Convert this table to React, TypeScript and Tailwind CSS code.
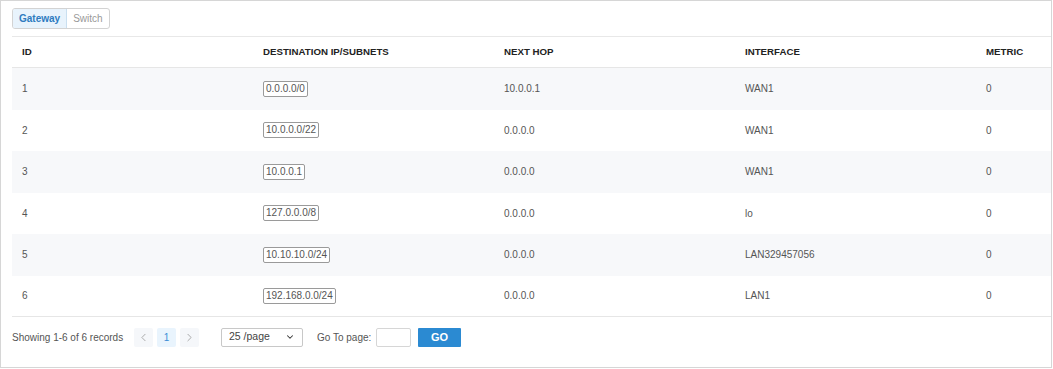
import { ChevronDown, ChevronLeft, ChevronRight } from 'lucide-react';

const routes = [
  { id: 1, dest: '0.0.0.0/0', hop: '10.0.0.1', iface: 'WAN1', metric: 0 },
  { id: 2, dest: '10.0.0.0/22', hop: '0.0.0.0', iface: 'WAN1', metric: 0 },
  { id: 3, dest: '10.0.0.1', hop: '0.0.0.0', iface: 'WAN1', metric: 0 },
  { id: 4, dest: '127.0.0.0/8', hop: '0.0.0.0', iface: 'lo', metric: 0 },
  { id: 5, dest: '10.10.10.0/24', hop: '0.0.0.0', iface: 'LAN329457056', metric: 0 },
  { id: 6, dest: '192.168.0.0/24', hop: '0.0.0.0', iface: 'LAN1', metric: 0 },
];

const cols = ['ID', 'Destination IP/Subnets', 'Next Hop', 'Interface', 'Metric'];

export default function App() {
  return (
    <div className="h-[368px] w-[1052px] border border-[#d6d6d6] bg-white pl-[11px] pt-[7px] font-['Liberation_Sans',Arial,sans-serif] text-[10px] text-[#555]">
      <div className="flex h-[21px] w-fit rounded-[3px] border border-[#d3d3d3]">
        <button className="rounded-l-[2px] border-r border-[#c9dff0] bg-[#e8f3fc] px-[6px] text-[10px] font-bold text-[#2e7bc0]">
          Gateway
        </button>
        <button className="px-[6px] text-[10px] text-[#999]">Switch</button>
      </div>

      <div className="mt-[7px] border-t border-[#e8e8e8]">
        <div className="flex h-[31px] items-center border-b border-[#e6e6e6] text-[9.7px] font-bold uppercase text-[#222]">
          {cols.map((c, i) => (
            <div key={c} className={i < 4 ? 'w-[241px] pl-[10px]' : 'flex-1 pl-[10px]'}>
              {c}
            </div>
          ))}
        </div>
        {routes.map((r, i) => (
          <div
            key={r.id}
            className={`flex h-[41.5px] items-center ${i % 2 === 0 ? 'bg-[#f7f8fa]' : 'bg-white'} ${i === routes.length - 1 ? 'border-b border-[#e6e6e6]' : ''}`}
          >
            <div className="w-[241px] pl-[10px]">{r.id}</div>
            <div className="w-[241px] pl-[10px]">
              <span className="inline-block rounded-[2px] border border-[#9a9a9a] bg-white px-[2px] leading-[14px] text-[#555]">
                {r.dest}
              </span>
            </div>
            <div className="w-[241px] pl-[10px]">{r.hop}</div>
            <div className="w-[241px] pl-[10px]">{r.iface}</div>
            <div className="flex-1 pl-[10px]">{r.metric}</div>
          </div>
        ))}
      </div>

      <div className="mt-[10px] flex h-[20px] items-center whitespace-nowrap text-[#555]">
        <span className="w-[122px] shrink-0">Showing 1-6 of 6 records</span>
        <button className="flex h-[19px] w-[19px] shrink-0 items-center justify-center rounded-[2px] bg-[#f5f7fa] text-[#999]">
          <ChevronLeft size={13} strokeWidth={1.5} />
        </button>
        <button className="ml-[4px] flex h-[19px] w-[19px] shrink-0 items-center justify-center rounded-[2px] bg-[#e9f4fd] text-[#3b8ed6]">
          1
        </button>
        <button className="ml-[4px] flex h-[19px] w-[19px] shrink-0 items-center justify-center rounded-[2px] bg-[#f5f7fa] text-[#999]">
          <ChevronRight size={13} strokeWidth={1.5} />
        </button>
        <div className="ml-[22px] flex h-[19px] w-[82px] shrink-0 items-center justify-between rounded-[2px] border border-[#c8c8c8] pl-[7px] pr-[7px] text-[10.5px] text-[#444]">
          <span>25 /page</span>
          <ChevronDown size={10} strokeWidth={2.5} className="text-[#333]" />
        </div>
        <span className="ml-[14px] w-[54px] shrink-0">Go To page:</span>
        <div className="ml-[5px] h-[19px] w-[35px] shrink-0 rounded-[2px] border border-[#d6d6d6] bg-white" />
        <button className="ml-[7px] h-[19px] w-[43px] shrink-0 rounded-[1px] bg-[#2b8ad2] text-[11px] font-bold text-white">
          GO
        </button>
      </div>
    </div>
  );
}
